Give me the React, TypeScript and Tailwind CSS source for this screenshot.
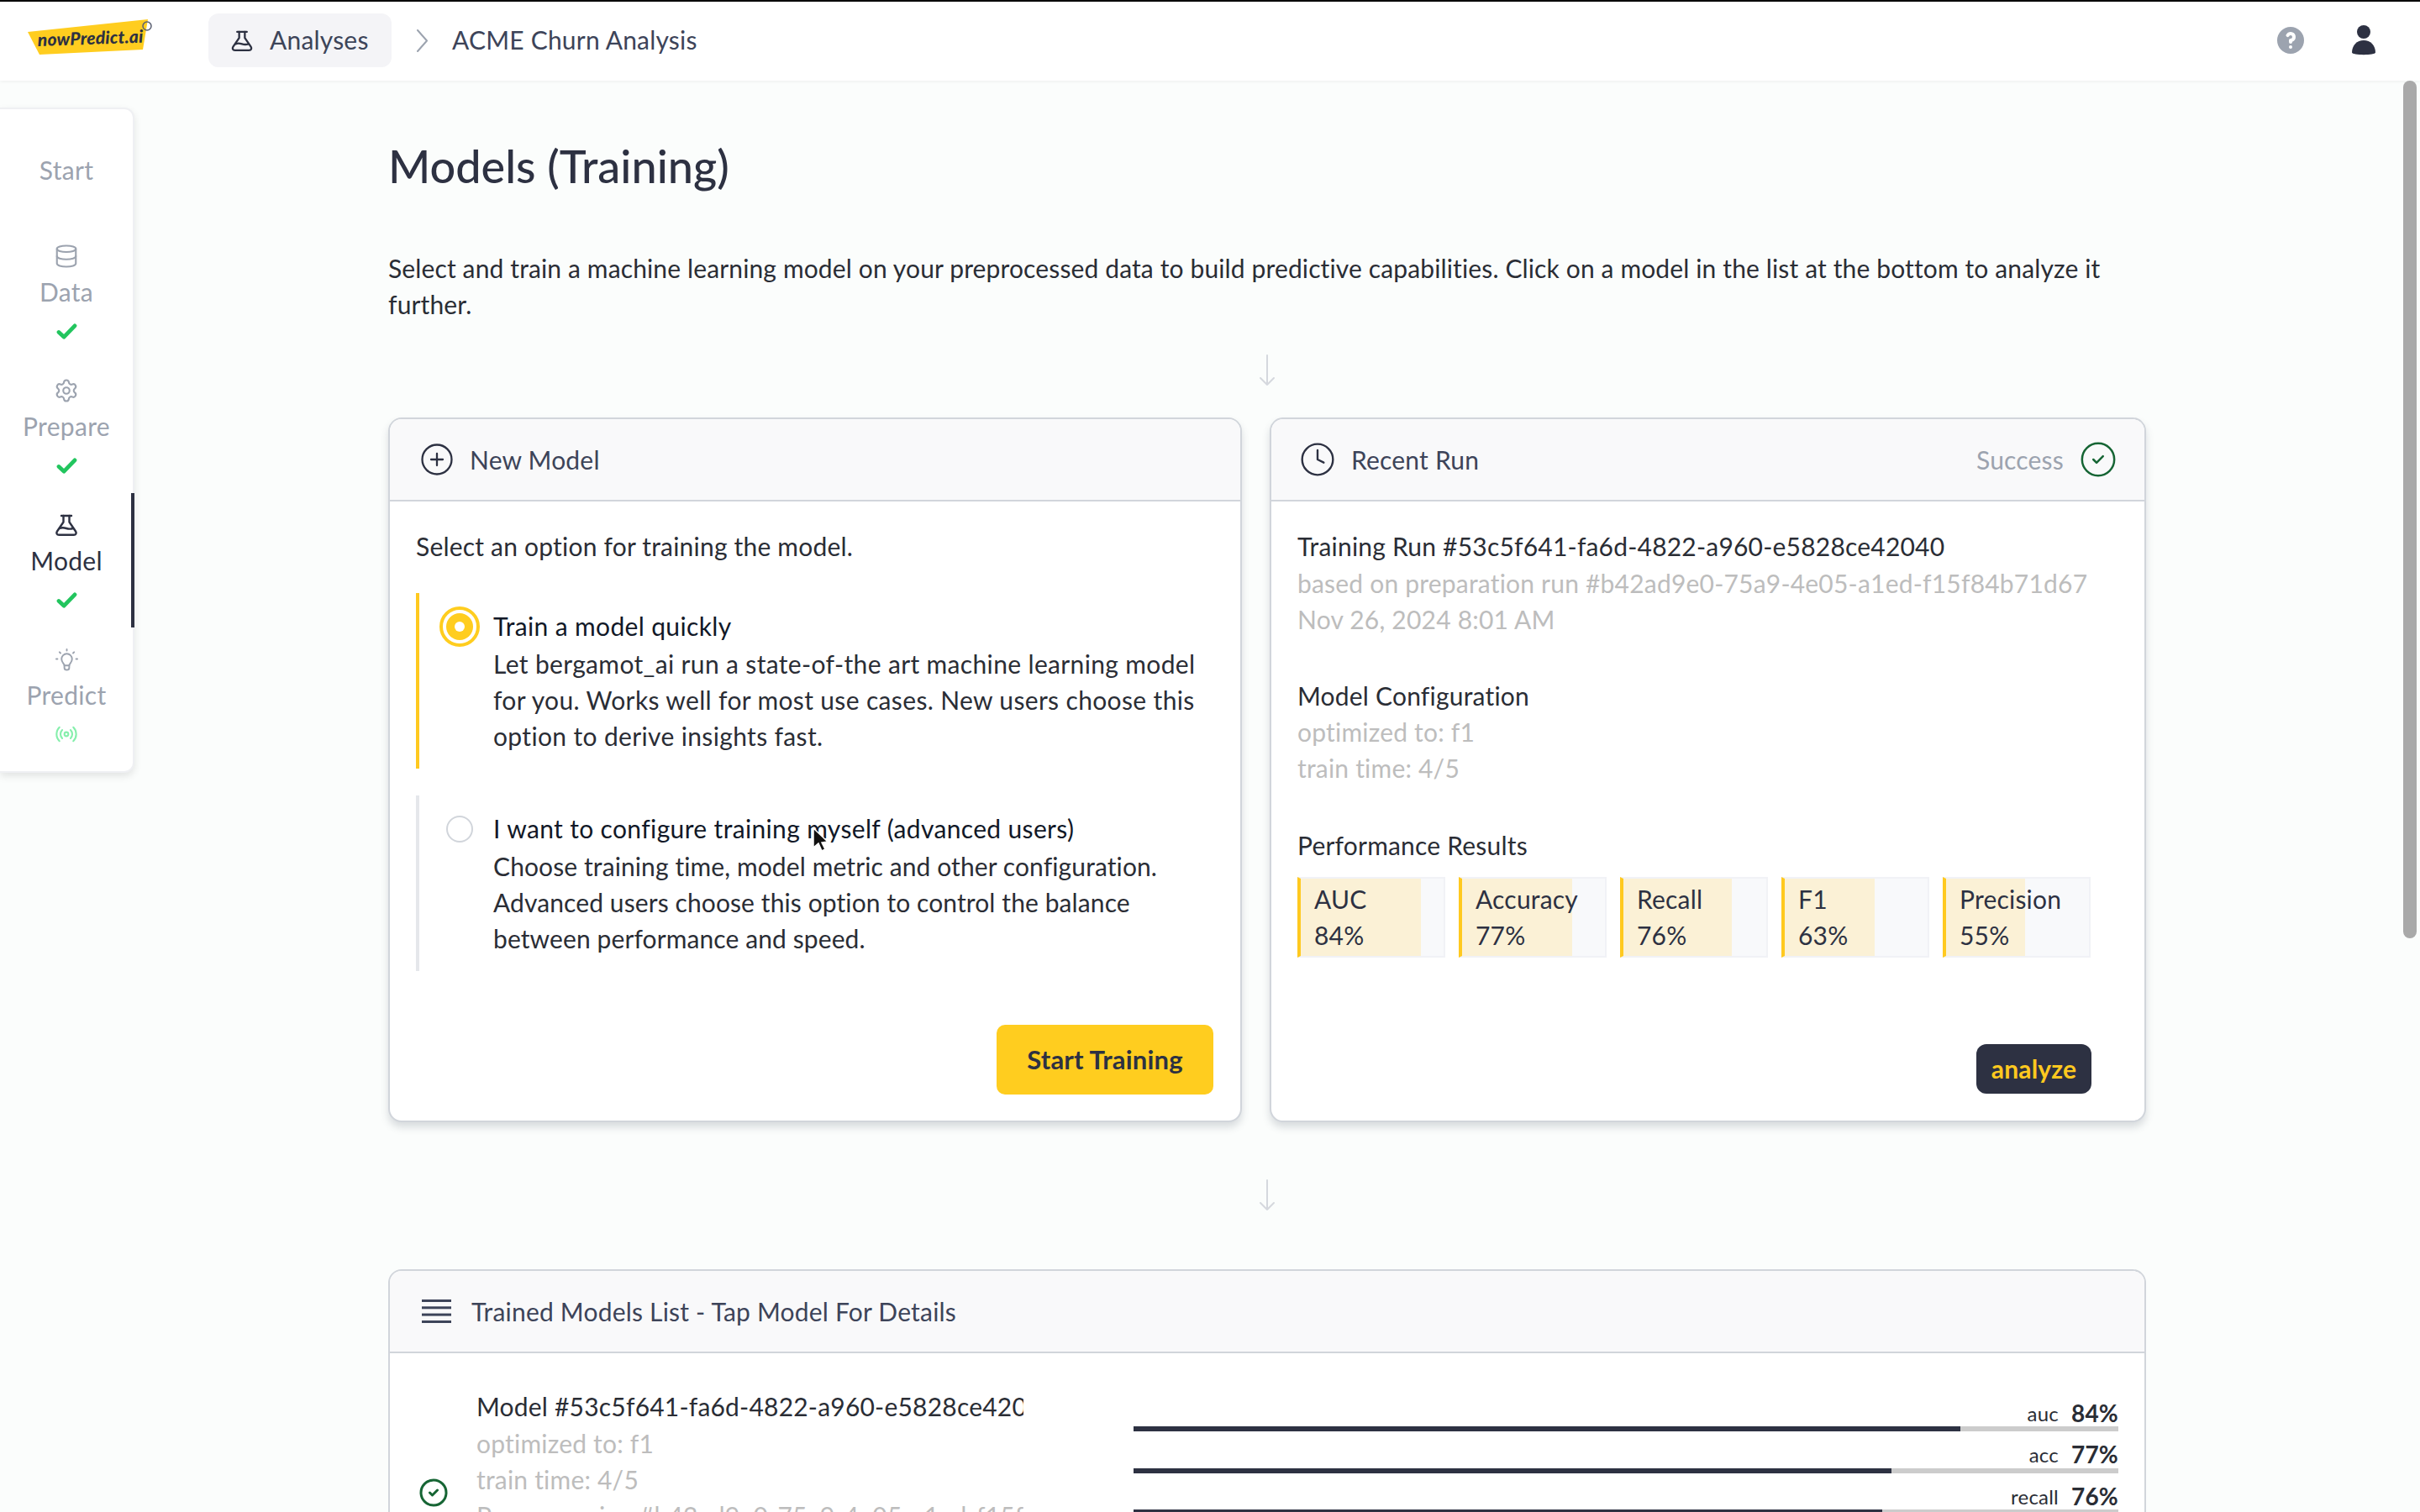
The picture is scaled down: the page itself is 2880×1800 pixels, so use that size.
import React from "react";
import { Database, Settings, Radio, CirclePlus, Clock, CircleCheck } from "lucide-react";
import { HiQuestionMarkCircle } from "react-icons/hi";

function Flask({ className }: { className?: string }) {
  return (
    <svg viewBox="0 0 28 26" fill="none" stroke="currentColor" strokeWidth="2.4" strokeLinecap="round" strokeLinejoin="round" className={className}>
      <path d="M8 2h12" />
      <path d="M10.5 2v7.5L3 20.5c-1.400 2.200-.4 4.300 2.200 4.300h17.600c2.600 0 3.600-2.100 2.200-4.300L17.500 9.500V2" />
      <path d="M6 17c3-1.500 5-1 8 0s5 1 8 0" />
    </svg>
  );
}

function Bulb({ className }: { className?: string }) {
  return (
    <svg viewBox="0 0 28 28" fill="none" stroke="currentColor" strokeWidth="2" strokeLinecap="round" strokeLinejoin="round" className={className}>
      <path d="M14 1v1.500M5 4.500l1.200 1.200M23 4.500l-1.200 1.200M1 13h1.500M25.500 13H27" />
      <path d="M11 21c0-2-3.500-3.500-3.500-8a6.500 6.500 0 0 1 13 0c0 4.500-3.500 6-3.500 8z" />
      <path d="M11 21v2.500a3 3 0 0 0 6 0V21" />
    </svg>
  );
}

function Check({ className }: { className?: string }) {
  return (
    <svg viewBox="0 0 26 20" fill="none" stroke="currentColor" strokeWidth="5" strokeLinecap="round" strokeLinejoin="round" className={className}>
      <path d="M3 11l6.500 6L23 3" />
    </svg>
  );
}

function DownArrow() {
  return (
    <svg viewBox="0 0 20 38" fill="none" stroke="#d5d8de" strokeWidth="2" strokeLinecap="round" strokeLinejoin="round" className="w-[20px] h-[38px]">
      <path d="M10 1v35M2 28l8 8 8-8" />
    </svg>
  );
}

function Logo() {
  return (
    <svg viewBox="0 0 190 50" className="w-[190px] h-[50px] shrink-0">
      <polygon points="33,15 176,0 170,36 47,42" fill="#ffcd1f" />
      <text x="45" y="32" fontFamily="Lato, sans-serif" fontWeight="900" fontStyle="italic" fontSize="21" fill="#2d3142" transform="rotate(-2 45 32)">nowPredict.ai</text>
      <circle cx="175" cy="8" r="5" fill="none" stroke="#5b6072" strokeWidth="1.500" />
    </svg>
  );
}

function SideItem({ icon, label, status, active }: { icon: React.ReactNode; label: string; status: React.ReactNode; active?: boolean }) {
  return (
    <div className={`relative h-[160px] flex flex-col items-center pt-[25px] ${active ? "text-[#2d3142]" : "text-[#9ca3af]"}`}>
      <div className="h-[26px] flex items-center justify-center">{icon}</div>
      <div className="text-[30px] tracking-[0.3px] leading-[43px] mt-[8px] h-[43px]">{label}</div>
      <div className="h-[24px] mt-[13px] flex items-center justify-center">{status}</div>
      {active && <div className="absolute right-[-2px] top-0 w-[4px] h-[160px] bg-[#2d3142]" />}
    </div>
  );
}

function Tile({ label, pct }: { label: string; pct: number }) {
  return (
    <div className="relative w-[176px] h-[96px] border-2 border-[#f1f2f6] border-l-4 border-l-[#ffc91f] bg-[#f8f9fb] text-[#2d3142]">
      <div className="absolute left-0 top-0 h-full bg-[#fbf1d6]" style={{ width: `${pct}%` }} />
      <div className="relative pl-[16px] pt-[3px] leading-[43px]">
        <div>{label}</div>
        <div>{pct}%</div>
      </div>
    </div>
  );
}

function Bar({ label, pct }: { label: string; pct: number }) {
  return (
    <div className="mb-[13.500px]">
      <div className="h-[30px] pb-[2px] flex items-center justify-end gap-[15px] text-[#2a2d35]">
        <span className="text-[24px]">{label}</span>
        <span className="text-[28px] font-bold">{pct}%</span>
      </div>
      <div className="h-[6px] bg-[#cccccc]">
        <div className="h-full bg-[#2d3142]" style={{ width: `${pct}%` }} />
      </div>
    </div>
  );
}

function CardHeader({ icon, title, right }: { icon: React.ReactNode; title: string; right?: React.ReactNode }) {
  return (
    <div className="h-[98px] bg-[#f9f9fa] border-b-2 border-[#d1d5db] rounded-t-[14px] flex items-center pr-[36px] text-[#3d4459]">
      {icon}
      <span>{title}</span>
      {right}
    </div>
  );
}

export default function App() {
  return (
    <div className="relative h-[1800px] w-[2880px] overflow-hidden bg-[#fbfdfc] font-['Lato',sans-serif] text-[30px] tracking-[0.2px] leading-[43.200px] text-[#2a2d35]">
      {/* top bar */}
      <header className="h-[96px] bg-white border-t-2 border-black shadow-[0_1px_4px_rgba(0,0,0,0.06)] flex items-center pr-[52px] pb-[2px]">
        <Logo />
        <div className="ml-[58px] h-[64px] w-[218px] bg-[#f4f4f7] rounded-[12px] flex items-center pl-[26px] gap-[19px] text-[#3d4459]">
          <Flask className="w-[28px] h-[25px] text-[#2d3142]" />
          <span>Analyses</span>
        </div>
        <svg viewBox="0 0 15 27" fill="none" stroke="#9ca3af" strokeWidth="2" strokeLinecap="round" strokeLinejoin="round" className="w-[15px] h-[27px] ml-[29px]">
          <path d="M2 1l11 12.500L2 26" />
        </svg>
        <span className="ml-[28px] text-[#3d4459]">ACME Churn Analysis</span>
        <div className="ml-auto flex items-center gap-[52px]">
          <HiQuestionMarkCircle className="w-[40px] h-[40px] text-[#9ca3af]" />
          <svg viewBox="0 0 30 38" className="w-[30px] h-[38px]" fill="#2d3142">
            <circle cx="15" cy="9" r="8" />
            <path d="M1 33.500C1 25 7 19 15 19s14 6 14 14.500C29 37 1 37 1 33.500z" />
          </svg>
        </div>
      </header>

      <div className="flex items-start">
        {/* stepper */}
        <aside className="mt-[32px] w-[160px] h-[792px] bg-white rounded-r-[12px] border-y-2 border-r-2 border-[#eff0f3] shadow-[0_4px_10px_rgba(0,0,0,0.1)] flex flex-col shrink-0">
          <div className="h-[137px] pt-[51px] text-center text-[#9ca3af] tracking-[0.3px] leading-[43px]">Start</div>
          <SideItem icon={<Database className="w-[30px] h-[30px]" strokeWidth={1.700} />} label="Data" status={<Check className="w-[25px] h-[19px] text-[#22c55e]" />} />
          <SideItem icon={<Settings className="w-[30px] h-[30px]" strokeWidth={1.700} />} label="Prepare" status={<Check className="w-[25px] h-[19px] text-[#22c55e]" />} />
          <SideItem active icon={<Flask className="w-[30px] h-[26px]" />} label="Model" status={<Check className="w-[25px] h-[19px] text-[#22c55e]" />} />
          <SideItem icon={<Bulb className="w-[27px] h-[27px]" />} label="Predict" status={<Radio className="w-[28px] h-[28px] text-[#86efac]" strokeWidth={1.800} />} />
        </aside>

        {/* content */}
        <main className="ml-[302px] w-[2092px] shrink-0">
          <h1 className="mt-[66px] text-[54px] tracking-normal leading-[72px] font-medium text-[#2d3142]">Models (Training)</h1>
          <p className="mt-[64px] tracking-[0.13px]">
            Select and train a machine learning model on your preprocessed data to build predictive capabilities. Click on a model in the list at the bottom to analyze it
            <br />
            further.
          </p>
          <div className="mt-[38px] flex justify-center">
            <DownArrow />
          </div>

          <div className="mt-[37px] flex gap-[33px] items-start">
            {/* new model */}
            <section className="w-[1016px] h-[839px] shrink-0 bg-white border-2 border-[#d1d5db] rounded-[16px] shadow-[0_6px_10px_rgba(60,70,90,0.18)]">
              <CardHeader title="New Model" icon={<CirclePlus className="w-[42px] h-[42px] ml-[35px] mr-[18px] text-[#2d3142]" strokeWidth={1.300} />} />
              <div className="pt-[32px] px-[31px]">
                <div>Select an option for training the model.</div>
                <div className="mt-[33px] h-[209px] border-l-4 border-[#ffc91f] flex items-start pl-[24px] pt-[16px]">
                  <div className="w-[48px] h-[48px] rounded-full border-4 border-[#ffcd1f] p-[4px] shrink-0">
                    <div className="w-full h-full rounded-full bg-[#ffcd1f] flex items-center justify-center">
                      <div className="w-[12px] h-[12px] rounded-full bg-white" />
                    </div>
                  </div>
                  <div className="ml-[16px] pt-[2px] tracking-[0.35px]">
                    <div className="text-[#111827] mb-[2px]">Train a model quickly</div>
                    <div>
                      Let bergamot_ai run a state-of-the art machine learning model
                      <br />
                      for you. Works well for most use cases. New users choose this
                      <br />
                      option to derive insights fast.
                    </div>
                  </div>
                </div>
                <div className="mt-[32px] h-[209px] border-l-4 border-[#e5e7eb] flex items-start pl-[24px] pt-[16px]">
                  <div className="w-[48px] h-[48px] flex items-center justify-center shrink-0">
                    <div className="w-[32px] h-[32px] rounded-full border-2 border-[#d1d5db] bg-white" />
                  </div>
                  <div className="ml-[16px] pt-[2px] tracking-[0.35px]">
                    <div className="text-[#111827] mb-[2px]">I want to configure training myself (advanced users)</div>
                    <div className="tracking-[0.1px]">
                      Choose training time, model metric and other configuration.
                      <br />
                      Advanced users choose this option to control the balance
                      <br />
                      between performance and speed.
                    </div>
                  </div>
                </div>
                <div className="mt-[64px] flex justify-end pr-[1px]">
                  <button className="w-[258px] h-[83px] bg-[#ffcd1f] rounded-[10px] font-bold text-[#2d3142] text-[31px]">Start Training</button>
                </div>
              </div>
            </section>

            {/* recent run */}
            <section className="w-[1043px] h-[839px] shrink-0 bg-white border-2 border-[#d1d5db] rounded-[16px] shadow-[0_6px_10px_rgba(60,70,90,0.18)]">
              <CardHeader
                title="Recent Run"
                icon={<Clock className="w-[44px] h-[44px] ml-[33px] mr-[18px] text-[#2d3142]" strokeWidth={1.300} />}
                right={
                  <div className="ml-auto flex items-center gap-[18px] text-[#9ca3af] mr-[-4px]">
                    <span>Success</span>
                    <CircleCheck className="w-[46px] h-[46px] text-[#166534]" strokeWidth={1.300} />
                  </div>
                }
              />
              <div className="pt-[32px] pl-[31px] pr-[63px]">
                <div>Training Run #53c5f641-fa6d-4822-a960-e5828ce42040</div>
                <div className="text-[#bdbdbd]">based on preparation run #b42ad9e0-75a9-4e05-a1ed-f15f84b71d67</div>
                <div className="text-[#bdbdbd]">Nov 26, 2024 8:01 AM</div>
                <div className="mt-[48px]">Model Configuration</div>
                <div className="text-[#bdbdbd]">optimized to: f1</div>
                <div className="text-[#bdbdbd]">train time: 4/5</div>
                <div className="mt-[48px]">Performance Results</div>
                <div className="mt-[16px] flex gap-[16px]">
                  <Tile label="AUC" pct={84} />
                  <Tile label="Accuracy" pct={77} />
                  <Tile label="Recall" pct={76} />
                  <Tile label="F1" pct={63} />
                  <Tile label="Precision" pct={55} />
                </div>
                <div className="mt-[103px] flex justify-end">
                  <button className="w-[137px] h-[59px] bg-[#2d3142] rounded-[12px] text-[#ffc91f] font-bold leading-none">analyze</button>
                </div>
              </div>
            </section>
          </div>

          <div className="mt-[68px] flex justify-center">
            <DownArrow />
          </div>

          {/* trained models list */}
          <section className="mt-[69px] bg-white border-2 border-[#d1d5db] rounded-[16px]">
            <CardHeader
              title="Trained Models List - Tap Model For Details"
              icon={
                <svg viewBox="0 0 35 28" className="w-[35px] h-[28px] ml-[38px] mr-[24px]" fill="#3d4459">
                  <rect x="0" y="0" width="35" height="3" />
                  <rect x="0" y="8.300" width="35" height="3" />
                  <rect x="0" y="16.600" width="35" height="3" />
                  <rect x="0" y="25" width="35" height="3" />
                </svg>
              }
            />
            <div className="pt-[42px] pl-[34px] flex items-start">
              <div className="h-[248px] flex items-center shrink-0">
                <CircleCheck className="w-[36px] h-[36px] text-[#166534]" strokeWidth={2} />
              </div>
              <div className="ml-[33px] w-[651px] shrink-0 overflow-hidden whitespace-nowrap">
                <div>Model #53c5f641-fa6d-4822-a960-e5828ce42040</div>
                <div className="text-[#bdbdbd]">optimized to: f1</div>
                <div className="text-[#bdbdbd]">train time: 4/5</div>
                <div className="text-[#bdbdbd]">Preprocessing #b42ad9e0-75a9-4e05-a1ed-f15f84b71d67</div>
              </div>
              <div className="ml-[131px] w-[1172px] pt-[15px] shrink-0">
                <Bar label="auc" pct={84} />
                <Bar label="acc" pct={77} />
                <Bar label="recall" pct={76} />
              </div>
            </div>
          </section>
        </main>
      </div>

      {/* mouse pointer */}
      <svg viewBox="0 0 20 30" className="absolute left-[966px] top-[985px] w-[20px] h-[30px]">
        <path d="M2 1v23l6-5 4 9 4-2-4-8 7-1z" fill="#111" stroke="#fff" strokeWidth="1.500" />
      </svg>

      {/* scrollbar thumb */}
      <div className="absolute left-[2860px] top-[96px] w-[16px] h-[1021px] rounded-full bg-[#a9a9a9]" />
    </div>
  );
}
